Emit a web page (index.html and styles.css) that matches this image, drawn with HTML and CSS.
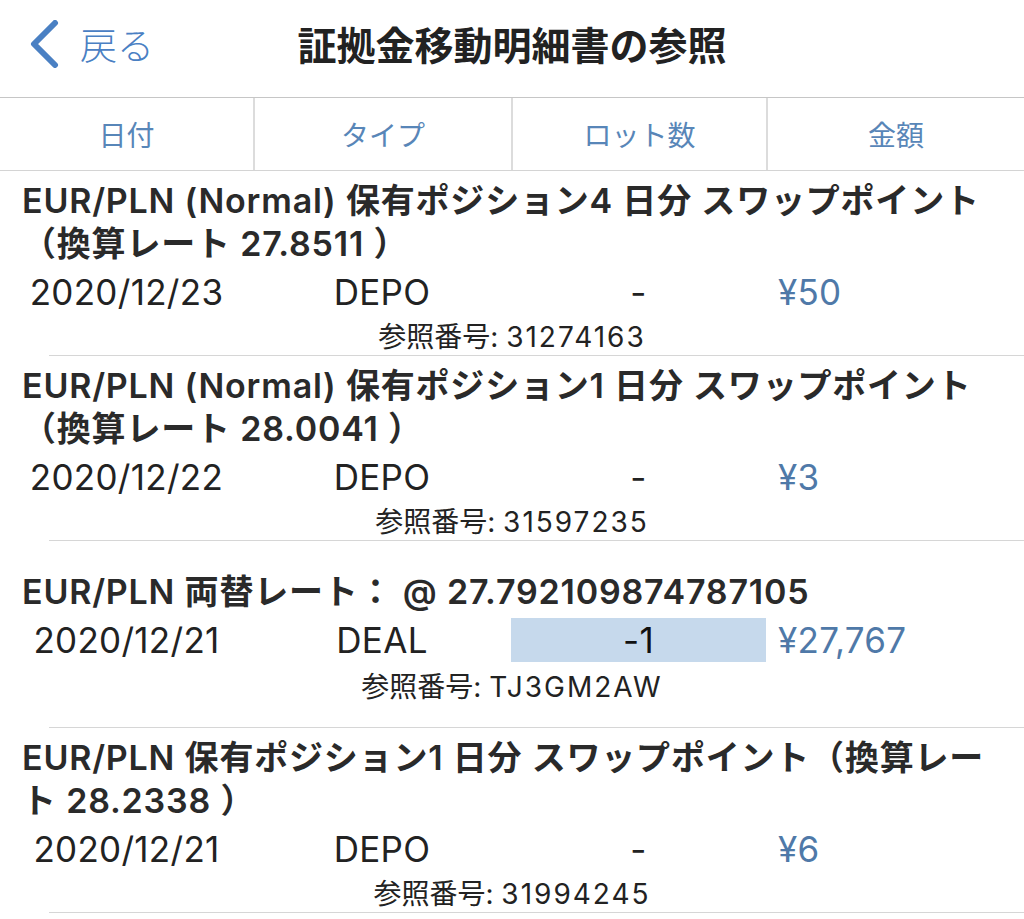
FILE: index.html
```html
<!DOCTYPE html>
<html lang="ja">
<head>
  <meta charset="UTF-8"/>
  <meta name="viewport" content="width=device-width,initial-scale=1"/>
  <title>証拠金移動明細書の参照</title>
  <link rel="stylesheet" href="styles.css">
</head>
<body>

  <header class="nav">
    <a class="nav-back" href="#">
      <svg class="nav-chevron" width="32" height="48" viewBox="0 0 32 48">
        <path d="M27 3 L6 24 L27 45" fill="none" stroke="currentColor" stroke-width="6" stroke-linecap="round" stroke-linejoin="round"/>
      </svg>
      <span>戻る</span>
    </a>
    <h1 class="nav-title">証拠金移動明細書の参照</h1>
  </header>

  <div class="tabs">
    <div class="tab">日付</div>
    <div class="tab">タイプ</div>
    <div class="tab">ロット数</div>
    <div class="tab">金額</div>
  </div>

  <ul class="entries">
    <li class="entry">
      <p class="entry-title">EUR/PLN (Normal) 保有ポジション4 日分 スワップポイント<br>（換算レート 27.8511 ）</p>
      <div class="entry-row">
        <span class="cell">2020/12/23</span>
        <span class="cell">DEPO</span>
        <span class="cell">-</span>
        <span class="cell cell-amount">¥50</span>
      </div>
      <p class="entry-ref">参照番号: <span class="ref-no">31274163</span></p>
    </li>
    <li class="entry">
      <p class="entry-title">EUR/PLN (Normal) 保有ポジション1 日分 スワップポイント<br>（換算レート 28.0041 ）</p>
      <div class="entry-row">
        <span class="cell">2020/12/22</span>
        <span class="cell">DEPO</span>
        <span class="cell">-</span>
        <span class="cell cell-amount">¥3</span>
      </div>
      <p class="entry-ref">参照番号: <span class="ref-no">31597235</span></p>
    </li>
    <li class="entry entry-single">
      <p class="entry-title">EUR/PLN 両替レート： @ 27.792109874787105</p>
      <div class="entry-row">
        <span class="cell">2020/12/21</span>
        <span class="cell">DEAL</span>
        <span class="cell"><span class="lot-mark">-1</span></span>
        <span class="cell cell-amount">¥27,767</span>
      </div>
      <p class="entry-ref">参照番号: <span class="ref-no">TJ3GM2AW</span></p>
    </li>
    <li class="entry">
      <p class="entry-title">EUR/PLN 保有ポジション1 日分 スワップポイント（換算レー<br>ト 28.2338 ）</p>
      <div class="entry-row">
        <span class="cell">2020/12/21</span>
        <span class="cell">DEPO</span>
        <span class="cell">-</span>
        <span class="cell cell-amount">¥6</span>
      </div>
      <p class="entry-ref">参照番号: <span class="ref-no">31994245</span></p>
    </li>
  </ul>

</body>
</html>
```

FILE: styles.css
```css
body {
  margin: 0;
  background: #fff;
  color: #222;
  font-family: "Inter", "Noto Sans CJK JP", sans-serif;
  overflow: hidden;
}

/* top bar */

.nav {
  display: flex;
  align-items: center;
  box-sizing: border-box;
  height: 98px;
  padding-bottom: 9px;
  border-bottom: 1px solid #c6c6c6;
  position: relative;
}

.nav-back {
  display: flex;
  align-items: center;
  gap: 20px;
  padding-left: 28px;
  color: #4a80c3;
  text-decoration: none;
  font-size: 37px;
  line-height: 44px;
  font-family: "Noto Sans CJK JP", sans-serif;
  font-weight: 300;
}

.nav-title {
  position: absolute;
  left: 0;
  right: 0;
  top: 0;
  margin: 0;
  line-height: 86px;
  text-align: center;
  font-size: 39px;
  font-weight: 700;
  color: #222;
  font-family: "Noto Sans CJK JP", sans-serif;
  pointer-events: none;
}

/* column tabs */

.tabs {
  display: grid;
  grid-template-columns: 253px 258px 255px 1fr;
  height: 72px;
  border-bottom: 1px solid #d4d4d4;
}

.tab {
  display: flex;
  align-items: center;
  justify-content: center;
  font-size: 28px;
  color: #5886b8;
  font-family: "Noto Sans CJK JP", sans-serif;
  font-weight: 400;
  border-left: 2px solid #dcdcdc;
}

.tab:first-child {
  border-left: none;
}

/* list */

.entries {
  list-style: none;
  margin: 0;
  padding: 0;
}

.entry {
  padding-top: 8px;
}

.entry::after {
  content: "";
  display: block;
  height: 1px;
  margin-left: 49px;
  background: #d6d6d6;
}

.entry-single {
  padding-top: 29px;
}

.entry-single .entry-ref {
  margin-top: 2px;
  padding-bottom: 22px;
}

.entry-title {
  margin: 0;
  padding-left: 22px;
  font-size: 34px;
  letter-spacing: 0.8px;
  line-height: 43px;
  font-weight: 600;
  color: #2a2a2a;
}

.entry-row {
  display: grid;
  grid-template-columns: 253px 258px 255px 1fr;
  height: 54px;
  align-items: center;
  font-size: 35px;
  letter-spacing: 0.3px;
  color: #222;
}

.cell {
  text-align: center;
  height: 44px;
  line-height: 44px;
}

.cell-amount {
  text-align: left;
  padding-left: 12px;
  color: #4f79a8;
}

.lot-mark {
  display: block;
  background: #c6d9ec;
  color: #111;
}

.entry-ref {
  margin: 0;
  text-align: center;
  font-size: 28px;
  line-height: 36px;
  color: #222;
}

.ref-no {
  letter-spacing: 2px;
}
```
